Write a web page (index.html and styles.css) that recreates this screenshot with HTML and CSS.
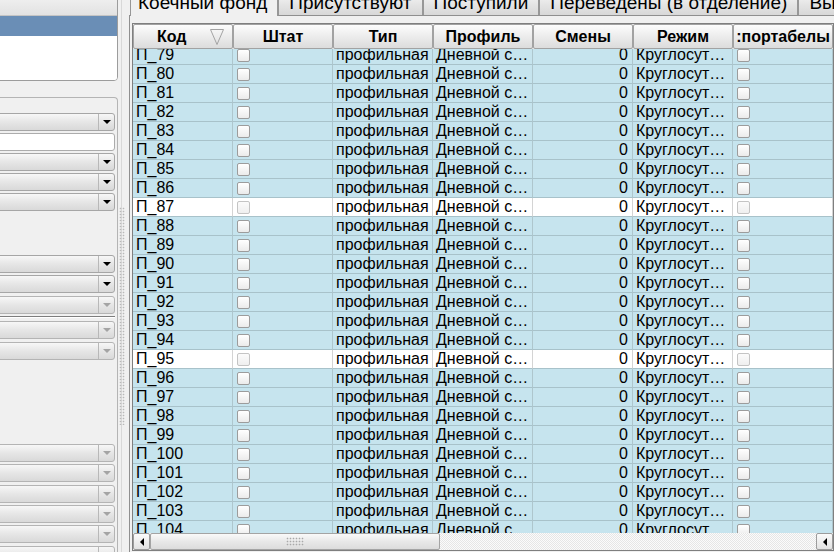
FILE: index.html
```html
<!DOCTYPE html>
<html lang="ru">
<head>
<meta charset="utf-8">
<title>Коечный фонд</title>
<link rel="stylesheet" href="styles.css">
</head>
<body>
<div class="app">
  <aside class="left">
    <div class="listbox">
      <div class="lb-head"></div>
      <div class="lb-sel"></div>
      <div class="lb-body"></div>
    </div>
    <div class="group">
      <div class="combo"><div class="cf"></div><div class="cb"><span class="arr"></span></div></div>
      <div class="input mt2"></div>
      <div class="combo mt2"><div class="cf"></div><div class="cb"><span class="arr"></span></div></div>
      <div class="combo mt2"><div class="cf"></div><div class="cb"><span class="arr"></span></div></div>
      <div class="combo mt2"><div class="cf"></div><div class="cb"><span class="arr"></span></div></div>
      <div class="combo mt44"><div class="cf"></div><div class="cb"><span class="arr"></span></div></div>
      <div class="combo mt2"><div class="cf"></div><div class="cb"><span class="arr"></span></div></div>
      <div class="combo dis mt3"><div class="cf"></div><div class="cb"><span class="arr"></span></div></div>
      <div class="sep"></div>
      <div class="combo dis mt3"><div class="cf"></div><div class="cb"><span class="arr"></span></div></div>
      <div class="combo dis mt3"><div class="cf"></div><div class="cb"><span class="arr"></span></div></div>
      <div class="combo dis mt84"><div class="cf"></div><div class="cb"><span class="arr"></span></div></div>
      <div class="combo dis mt2"><div class="cf"></div><div class="cb"><span class="arr"></span></div></div>
      <div class="combo dis mt3"><div class="cf"></div><div class="cb"><span class="arr"></span></div></div>
      <div class="combo dis mt2"><div class="cf"></div><div class="cb"><span class="arr"></span></div></div>
      <div class="combo dis mt2"><div class="cf"></div><div class="cb"><span class="arr"></span></div></div>
      <div class="combo dis mt3"><div class="cf"></div><div class="cb"><span class="arr"></span></div></div>
    </div>
  </aside>

  <div class="splitter"><div class="grip"></div></div>

  <main class="right">
    <div class="tabs">
      <div class="tab sel">Коечный фонд</div>
      <div class="tab">Присутствуют</div>
      <div class="tab">Поступили</div>
      <div class="tab">Переведены (в отделение)</div>
      <div class="tab">Выбыли</div>
    </div>
    <div class="pane">
      <div class="grid">
        <div class="ghead">
          <div class="hc h-sort"><span>Код</span><svg class="sort" width="14" height="16" viewBox="0 0 14 16"><polygon points="0.5,0.5 13.5,0.5 7,15.5" fill="none" stroke="#a3a3a3" stroke-width="1"/></svg></div>
          <div class="hc">Штат</div>
          <div class="hc">Тип</div>
          <div class="hc">Профиль</div>
          <div class="hc">Смены</div>
          <div class="hc">Режим</div>
          <div class="hc">:портабелы</div>
        </div>
        <div class="gbody">
          <div class="rows">
            <div class="row"><div class="c">П_79</div><div class="c ck"><span class="chk"></span></div><div class="c">профильная</div><div class="c">Дневной с…</div><div class="c num">0</div><div class="c">Круглосут…</div><div class="c ck"><span class="chk"></span></div></div>
            <div class="row"><div class="c">П_80</div><div class="c ck"><span class="chk"></span></div><div class="c">профильная</div><div class="c">Дневной с…</div><div class="c num">0</div><div class="c">Круглосут…</div><div class="c ck"><span class="chk"></span></div></div>
            <div class="row"><div class="c">П_81</div><div class="c ck"><span class="chk"></span></div><div class="c">профильная</div><div class="c">Дневной с…</div><div class="c num">0</div><div class="c">Круглосут…</div><div class="c ck"><span class="chk"></span></div></div>
            <div class="row"><div class="c">П_82</div><div class="c ck"><span class="chk"></span></div><div class="c">профильная</div><div class="c">Дневной с…</div><div class="c num">0</div><div class="c">Круглосут…</div><div class="c ck"><span class="chk"></span></div></div>
            <div class="row"><div class="c">П_83</div><div class="c ck"><span class="chk"></span></div><div class="c">профильная</div><div class="c">Дневной с…</div><div class="c num">0</div><div class="c">Круглосут…</div><div class="c ck"><span class="chk"></span></div></div>
            <div class="row"><div class="c">П_84</div><div class="c ck"><span class="chk"></span></div><div class="c">профильная</div><div class="c">Дневной с…</div><div class="c num">0</div><div class="c">Круглосут…</div><div class="c ck"><span class="chk"></span></div></div>
            <div class="row"><div class="c">П_85</div><div class="c ck"><span class="chk"></span></div><div class="c">профильная</div><div class="c">Дневной с…</div><div class="c num">0</div><div class="c">Круглосут…</div><div class="c ck"><span class="chk"></span></div></div>
            <div class="row"><div class="c">П_86</div><div class="c ck"><span class="chk"></span></div><div class="c">профильная</div><div class="c">Дневной с…</div><div class="c num">0</div><div class="c">Круглосут…</div><div class="c ck"><span class="chk"></span></div></div>
            <div class="row w"><div class="c">П_87</div><div class="c ck"><span class="chk"></span></div><div class="c">профильная</div><div class="c">Дневной с…</div><div class="c num">0</div><div class="c">Круглосут…</div><div class="c ck"><span class="chk"></span></div></div>
            <div class="row"><div class="c">П_88</div><div class="c ck"><span class="chk"></span></div><div class="c">профильная</div><div class="c">Дневной с…</div><div class="c num">0</div><div class="c">Круглосут…</div><div class="c ck"><span class="chk"></span></div></div>
            <div class="row"><div class="c">П_89</div><div class="c ck"><span class="chk"></span></div><div class="c">профильная</div><div class="c">Дневной с…</div><div class="c num">0</div><div class="c">Круглосут…</div><div class="c ck"><span class="chk"></span></div></div>
            <div class="row"><div class="c">П_90</div><div class="c ck"><span class="chk"></span></div><div class="c">профильная</div><div class="c">Дневной с…</div><div class="c num">0</div><div class="c">Круглосут…</div><div class="c ck"><span class="chk"></span></div></div>
            <div class="row"><div class="c">П_91</div><div class="c ck"><span class="chk"></span></div><div class="c">профильная</div><div class="c">Дневной с…</div><div class="c num">0</div><div class="c">Круглосут…</div><div class="c ck"><span class="chk"></span></div></div>
            <div class="row"><div class="c">П_92</div><div class="c ck"><span class="chk"></span></div><div class="c">профильная</div><div class="c">Дневной с…</div><div class="c num">0</div><div class="c">Круглосут…</div><div class="c ck"><span class="chk"></span></div></div>
            <div class="row"><div class="c">П_93</div><div class="c ck"><span class="chk"></span></div><div class="c">профильная</div><div class="c">Дневной с…</div><div class="c num">0</div><div class="c">Круглосут…</div><div class="c ck"><span class="chk"></span></div></div>
            <div class="row"><div class="c">П_94</div><div class="c ck"><span class="chk"></span></div><div class="c">профильная</div><div class="c">Дневной с…</div><div class="c num">0</div><div class="c">Круглосут…</div><div class="c ck"><span class="chk"></span></div></div>
            <div class="row w"><div class="c">П_95</div><div class="c ck"><span class="chk"></span></div><div class="c">профильная</div><div class="c">Дневной с…</div><div class="c num">0</div><div class="c">Круглосут…</div><div class="c ck"><span class="chk"></span></div></div>
            <div class="row"><div class="c">П_96</div><div class="c ck"><span class="chk"></span></div><div class="c">профильная</div><div class="c">Дневной с…</div><div class="c num">0</div><div class="c">Круглосут…</div><div class="c ck"><span class="chk"></span></div></div>
            <div class="row"><div class="c">П_97</div><div class="c ck"><span class="chk"></span></div><div class="c">профильная</div><div class="c">Дневной с…</div><div class="c num">0</div><div class="c">Круглосут…</div><div class="c ck"><span class="chk"></span></div></div>
            <div class="row"><div class="c">П_98</div><div class="c ck"><span class="chk"></span></div><div class="c">профильная</div><div class="c">Дневной с…</div><div class="c num">0</div><div class="c">Круглосут…</div><div class="c ck"><span class="chk"></span></div></div>
            <div class="row"><div class="c">П_99</div><div class="c ck"><span class="chk"></span></div><div class="c">профильная</div><div class="c">Дневной с…</div><div class="c num">0</div><div class="c">Круглосут…</div><div class="c ck"><span class="chk"></span></div></div>
            <div class="row"><div class="c">П_100</div><div class="c ck"><span class="chk"></span></div><div class="c">профильная</div><div class="c">Дневной с…</div><div class="c num">0</div><div class="c">Круглосут…</div><div class="c ck"><span class="chk"></span></div></div>
            <div class="row"><div class="c">П_101</div><div class="c ck"><span class="chk"></span></div><div class="c">профильная</div><div class="c">Дневной с…</div><div class="c num">0</div><div class="c">Круглосут…</div><div class="c ck"><span class="chk"></span></div></div>
            <div class="row"><div class="c">П_102</div><div class="c ck"><span class="chk"></span></div><div class="c">профильная</div><div class="c">Дневной с…</div><div class="c num">0</div><div class="c">Круглосут…</div><div class="c ck"><span class="chk"></span></div></div>
            <div class="row"><div class="c">П_103</div><div class="c ck"><span class="chk"></span></div><div class="c">профильная</div><div class="c">Дневной с…</div><div class="c num">0</div><div class="c">Круглосут…</div><div class="c ck"><span class="chk"></span></div></div>
            <div class="row"><div class="c">П_104</div><div class="c ck"><span class="chk"></span></div><div class="c">профильная</div><div class="c">Дневной с…</div><div class="c num">0</div><div class="c">Круглосут…</div><div class="c ck"><span class="chk"></span></div></div>
          </div>
        </div>
        <div class="hscroll">
          <div class="sb-btn"><span class="tri"></span></div>
          <div class="sb-thumb"><span class="dots"></span></div>
          <div class="sb-track"></div>
          <div class="sb-btn"><span class="tri"></span></div>
        </div>
      </div>
    </div>
  </main>
</div>
</body>
</html>
```

FILE: styles.css
```css
* { box-sizing: border-box; }
html, body { margin: 0; padding: 0; }
body {
  width: 834px;
  height: 552px;
  overflow: hidden;
  background: #f0f0f0;
  font-family: "Liberation Sans", Arial, sans-serif;
  color: #000;
}
.app { display: flex; height: 552px; }

/* ---------- left panel ---------- */
.left { width: 118px; flex-shrink: 0; display: flex; flex-direction: column; overflow: hidden; }
.listbox {
  margin: -6px 0 0 -6px;
  height: 87px;
  flex-shrink: 0;
  border: 1px solid #9c9c9c;
  border-radius: 0 0 4px 0;
  background: #fff;
  display: flex;
  flex-direction: column;
  overflow: hidden;
}
.lb-head { height: 21px; flex-shrink: 0; background: linear-gradient(#f2f2f2, #e2e2e2); border-bottom: 1px solid #c4c4c4; }
.lb-sel { height: 20px; flex-shrink: 0; background: #6a8eb6; }
.lb-body { flex: 1; background: #fff; }

.group {
  margin: 16px 0 0 -6px;
  flex: 1 0 auto;
  border-top: 1px solid #b4b4b4;
  border-right: 1px solid #b4b4b4;
  border-radius: 0 4px 0 0;
  padding: 15px 2px 0 0;
  display: flex;
  flex-direction: column;
}
.combo {
  height: 18px;
  flex-shrink: 0;
  display: flex;
  border: 1px solid #a6a6a6;
  border-radius: 3px;
  background: linear-gradient(#f7f7f7, #e6e6e6 50%, #d9d9d9);
}
.combo .cf { flex: 1; }
.combo .cb {
  width: 16px;
  border-left: 1px solid #b8b8b8;
  display: flex;
  align-items: center;
  justify-content: center;
}
.arr {
  width: 0; height: 0;
  border-left: 4px solid transparent;
  border-right: 4px solid transparent;
  border-top: 4px solid #000;
}
.dis .arr { border-top-color: #a4a4a4; }
.dis { border-color: #b4b4b4; }
.input {
  height: 18px;
  flex-shrink: 0;
  border: 1px solid #acacac;
  border-radius: 3px;
  background: #fff;
}
.sep {
  margin-top: 2px;
  height: 2px;
  flex-shrink: 0;
  border-top: 1px solid #7d7d7d;
  border-bottom: 1px solid #ffffff;
}
.mt2 { margin-top: 2px; }
.mt3 { margin-top: 3px; }
.mt44 { margin-top: 44px; }
.mt84 { margin-top: 84px; }

/* ---------- splitter ---------- */
.splitter {
  width: 11px;
  flex-shrink: 0;
  background: linear-gradient(to right, transparent 3px, #d8d8d8 3px, #d8d8d8 4px, transparent 4px);
}
.grip {
  margin: 207px 0 0 1px;
  width: 6px;
  height: 218px;
  background-image: radial-gradient(circle, #b9b9b9 0.7px, transparent 1.1px);
  background-size: 3px 3px;
}

/* ---------- right panel ---------- */
.right {
  flex: 1;
  min-width: 0;
  overflow: hidden;
  display: flex;
  flex-direction: column;
}
.tabs {
  display: flex;
  margin-top: -9px;
  height: 24px;
  padding-left: 1px;
  flex-shrink: 0;
}
.tab {
  flex-shrink: 0;
  height: 24px;
  padding: 0 10px;
  border: 1px solid #979797;
  border-bottom: none;
  border-radius: 3px 3px 0 0;
  background: linear-gradient(#f7f7f7, #e4e4e4 55%, #d8d8d8);
  font-size: 19px;
  line-height: 22px;
  white-space: nowrap;
}
.tab.sel {
  background: #f0f0f0;
  height: 25px;
  padding: 0 10px 0 7px;
  position: relative;
  z-index: 1;
}
.pane {
  flex: 1;
  border-left: 1px solid #8f8f8f;
  border-top: 1px solid #8f8f8f;
  padding: 7px 0 0 2px;
}
.grid {
  width: 702px;
  height: 528px;
  border: 1px solid #7f7f7f;
  display: flex;
  flex-direction: column;
  background: #fff;
}
.ghead { display: flex; height: 25px; flex-shrink: 0; background: #e9e9e9; }
.hc {
  width: 100px;
  flex-shrink: 0;
  height: 25px;
  border: 1px solid #a2a2a2;
  border-radius: 2px;
  background: linear-gradient(#fdfdfd, #ececec 50%, #dcdcdc);
  font-size: 16px;
  font-weight: bold;
  line-height: 23px;
  text-align: center;
  white-space: nowrap;
  overflow: hidden;
}
.h-sort {
  display: flex;
  align-items: center;
  justify-content: space-between;
  padding: 0 8px 0 23px;
}
.sort { display: block; }

.gbody { height: 484px; overflow: hidden; flex-shrink: 0; }
.rows { margin-top: -3px; }
.row { display: flex; height: 19px; background: #c6e4ee; }
.row.w { background: #fff; }
.c {
  width: 100px;
  flex-shrink: 0;
  height: 19px;
  border-right: 1px solid #aec6cd;
  border-bottom: 1px solid #a8c2ca;
  padding: 0 3px;
  font-size: 16px;
  line-height: 18px;
  white-space: nowrap;
  overflow: hidden;
}
.row.w .c { border-right-color: #d4d4d4; }
.c.num { text-align: right; padding-right: 4px; }
.c.ck { display: flex; align-items: center; padding-left: 4px; }
.chk {
  width: 13px;
  height: 13px;
  border: 1px solid #9c9c9c;
  border-radius: 2px;
  background: linear-gradient(#ffffff, #ebebeb);
}
.row.w .chk { border-color: #c4c4c4; background: linear-gradient(#fbfbfb, #efefef); }

.hscroll { display: flex; height: 17px; flex-shrink: 0; background: #f0f0f0; }
.sb-btn {
  width: 17px;
  flex-shrink: 0;
  border: 1px solid #9c9c9c;
  border-radius: 2px;
  background: linear-gradient(#fbfbfb, #e2e2e2);
  display: flex;
  align-items: center;
  justify-content: center;
}
.tri {
  width: 0; height: 0;
  border-top: 4px solid transparent;
  border-bottom: 4px solid transparent;
  border-right: 4px solid #000;
}
.sb-thumb {
  width: 290px;
  flex-shrink: 0;
  border: 1px solid #a4a4a4;
  border-radius: 2px;
  background: linear-gradient(#fafafa, #e8e8e8 50%, #dcdcdc);
  display: flex;
  align-items: center;
  justify-content: center;
}
.dots {
  width: 18px;
  height: 9px;
  background-image: radial-gradient(circle, #a9a9a9 0.7px, transparent 1.1px);
  background-size: 3px 3px;
}
.sb-track {
  flex: 1;
  background: repeating-conic-gradient(#e6e6e6 0 25%, #fbfbfb 0 50%) 0 0 / 2px 2px;
}
```
